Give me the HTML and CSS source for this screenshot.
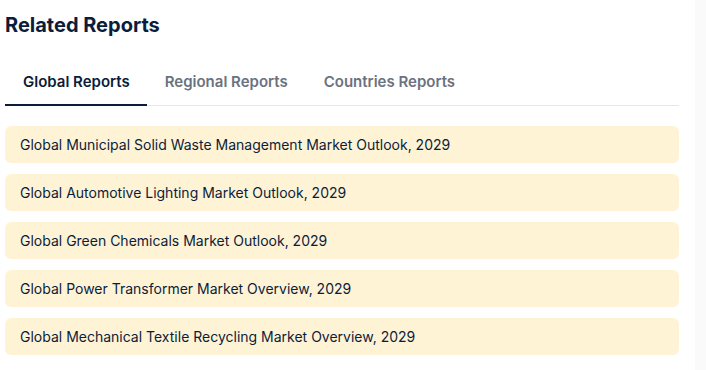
FILE: index.html
```html
<!DOCTYPE html>
<html lang="en">
<head>
    <meta charset="UTF-8">
    <title>Related Reports</title>
    <link rel="stylesheet" href="styles.css">
</head>
<body>
    <div class="panel">
        <h2 class="title">Related Reports</h2>

        <!-- Tabs -->
        <div class="tabs">
            <span class="tab active">Global Reports</span>
            <span class="tab">Regional Reports</span>
            <span class="tab">Countries Reports</span>
        </div>

        <!-- Lista de reportes -->
        <ul class="reports">
            <li>Global Municipal Solid Waste Management Market Outlook, 2029</li>
            <li>Global Automotive Lighting Market Outlook, 2029</li>
            <li>Global Green Chemicals Market Outlook, 2029</li>
            <li>Global Power Transformer Market Overview, 2029</li>
            <li>Global Mechanical Textile Recycling Market Overview, 2029</li>
        </ul>
    </div>
</body>
</html>
```

FILE: styles.css
```css
html, body { margin: 0; padding: 0; background: #fafafa; }
body { font-family: Inter, "Noto Sans", sans-serif; color: #0b1d3a; }
.panel { width: 674px; height: 370px; padding: 0 16px 0 5px; background: #fff; }
.title { margin: 0; padding-top: 12px; font-size: 20px; font-weight: 700; line-height: 26px; color: #0b1d3a; }
.tabs { display: flex; margin-top: 22px; border-bottom: 1px solid #e5e7eb; }
.tab { padding: 12px 18px; font-size: 15px; font-weight: 600; line-height: 20px; color: #6b7280; border-bottom: 2px solid transparent; margin-bottom: -1px; }
.tab.active { padding-right: 17px; color: #0b1d3a; border-bottom-color: #0b1d3a; }
.reports { list-style: none; margin: 20px 0 0; padding: 0; display: flex; flex-direction: column; gap: 11px; }
.reports li { background: #fff3d6; border-radius: 6px; padding: 9px 15px; font-size: 14px; line-height: 19px; color: #0b1d3a; }
```
